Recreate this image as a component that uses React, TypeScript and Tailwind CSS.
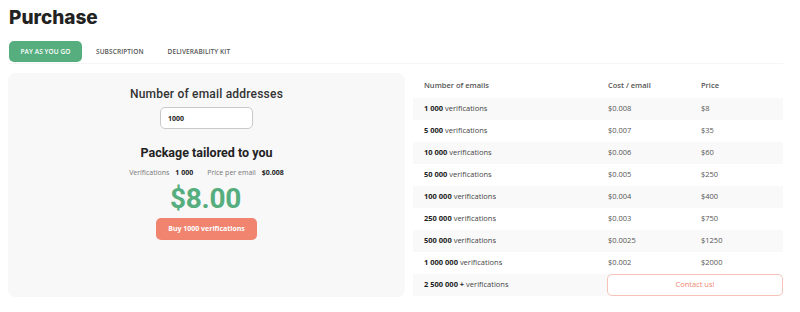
import React, { useState } from 'react';

const tabs = ['PAY AS YOU GO', 'SUBSCRIPTION', 'DELIVERABILITY KIT'];

const rows = [
  { qty: '1 000', cost: '$0.008', price: '$8' },
  { qty: '5 000', cost: '$0.007', price: '$35' },
  { qty: '10 000', cost: '$0.006', price: '$60' },
  { qty: '50 000', cost: '$0.005', price: '$250' },
  { qty: '100 000', cost: '$0.004', price: '$400' },
  { qty: '250 000', cost: '$0.003', price: '$750' },
  { qty: '500 000', cost: '$0.0025', price: '$1250' },
  { qty: '1 000 000', cost: '$0.002', price: '$2000' },
];

const body = { fontFamily: '"Open Sans", "Noto Sans", sans-serif' };
const head = { fontFamily: 'Roboto, "Liberation Sans", sans-serif' };

const App = () => {
  const [active, setActive] = useState(0);
  const [count, setCount] = useState('1000');

  return (
    <div className="w-[800px] h-[312px] bg-white px-[9px] text-[#222]" style={body}>
      <h1 className="text-[19px] leading-[28px] font-extrabold pt-[4px]" style={{ fontFamily: 'Inter, sans-serif' }}>
        Purchase
      </h1>

      <div className="mt-[9px] flex items-center border-b border-[#f5f5f5] pb-[1px] w-[774px]">
        {tabs.map((t, i) => (
          <button
            key={t}
            onClick={() => setActive(i)}
            className={`h-[21px] rounded-[5px] text-[6.5px] font-semibold tracking-[0.1px] ${
              i === active ? 'bg-[#56ae7f] text-white w-[73px]' : 'text-[#555] px-[14px]'
            } ${i === 2 ? 'ml-[-4px]' : ''}`}
          >
            {t}
          </button>
        ))}
      </div>

      <div className="mt-[9px] flex gap-[8px]">
        <div className="w-[397px] h-[224px] -ml-[1px] rounded-[8px] bg-[#f8f8f9] flex flex-col items-center">
          <div className="mt-[13px] text-[12px] leading-[16px] font-medium tracking-[0.2px] text-[#333]" style={head}>
            Number of email addresses
          </div>
          <input
            value={count}
            onChange={e => setCount(e.target.value)}
            className="mt-[5px] w-[93px] h-[22px] rounded-[5px] border border-[#c9c9c9] bg-white px-[7px] text-[7px] font-bold outline-none"
          />
          <div className="mt-[16px] text-[12.5px] leading-[16px] font-bold" style={head}>
            Package tailored to you
          </div>
          <div className="mt-[7px] flex items-center text-[7px] leading-[10px]">
            <span className="text-[#777]">Verifications</span>
            <span className="ml-[6px] font-bold">1 000</span>
            <span className="ml-[14px] text-[#777]">Price per email</span>
            <span className="ml-[6px] font-bold">$0.008</span>
          </div>
          <div className="mt-[5px] -ml-[2px] text-[28px] leading-[32px] font-bold tracking-[-0.3px] text-[#56ae7f]" style={head}>
            $8.00
          </div>
          <button className="mt-[3px] w-[101px] h-[22px] rounded-[5px] bg-[#f0846f] text-white text-[7px] font-bold">
            Buy 1000 verifications
          </button>
        </div>

        <div className="w-[370px] text-[7.5px]">
          <div className="h-[25px] flex items-center text-[#555] font-semibold">
            <div className="w-[195px] pl-[11px]">Number of emails</div>
            <div className="w-[93px]">Cost / email</div>
            <div>Price</div>
          </div>
          {rows.map((r, i) => (
            <div key={r.qty} className={`h-[22px] flex items-center ${i % 2 === 0 ? 'bg-[#f9f9f9]' : ''}`}>
              <div className="w-[195px] pl-[11px]">
                <span className="font-bold">{r.qty}</span> <span className="text-[#444]">verifications</span>
              </div>
              <div className="w-[93px] text-[#555]">{r.cost}</div>
              <div className="text-[#555]">{r.price}</div>
            </div>
          ))}
          <div className="h-[22px] flex items-center bg-[#f9f9f9]">
            <div className="w-[194px] pl-[11px]">
              <span className="font-bold">2 500 000 +</span> <span className="text-[#444]">verifications</span>
            </div>
            <button className="flex-1 h-[22px] rounded-[5px] border border-[#f7c3b8] bg-white text-[#f0846f] text-[7.5px]">
              Contact us!
            </button>
          </div>
        </div>
      </div>
    </div>
  );
};

export default App;
